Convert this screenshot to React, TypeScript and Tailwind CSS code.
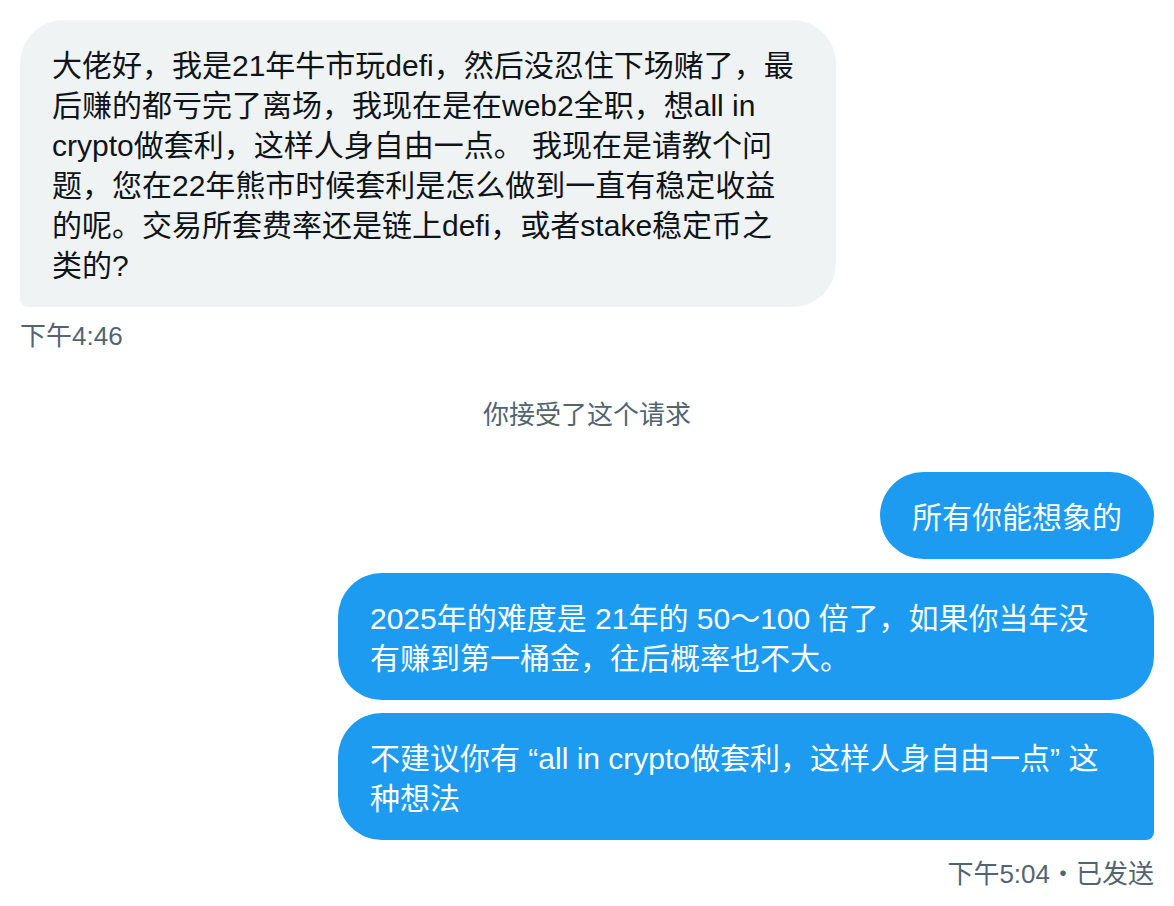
import React from "react";

const font = {
  fontFamily: '"Liberation Sans", "Noto Sans CJK SC", sans-serif',
};

export default function App() {
  return (
    <div
      className="w-[1174px] h-[906px] bg-white flex flex-col px-[20px] pt-[20px] overflow-hidden"
      style={font}
    >
      <div className="self-start w-[816px] bg-[#eff3f4] rounded-[44px] rounded-bl-[8px] px-[32px] pt-[26px] pb-[21px] text-[30px] leading-[40px] text-[#0f1419] whitespace-nowrap">
        大佬好，我是21年牛市玩defi，然后没忍住下场赌了，最
        <br />
        后赚的都亏完了离场，我现在是在web2全职，想all in
        <br />
        crypto做套利，这样人身自由一点。 我现在是请教个问
        <br />
        题，您在22年熊市时候套利是怎么做到一直有稳定收益
        <br />
        的呢。交易所套费率还是链上defi，或者stake稳定币之
        <br />
        类的?
      </div>
      <div className="mt-[13px] text-[26px] leading-[32px] text-[#536471]">
        下午4:46
      </div>

      <div className="mt-[47px] text-center text-[26px] leading-[32px] text-[#536471]">
        你接受了这个请求
      </div>

      <div className="mt-[41px] self-end bg-[#1d9bf0] rounded-[44px] px-[32px] pt-[26px] pb-[21px] text-[30px] leading-[40px] text-white whitespace-nowrap">
        所有你能想象的
      </div>
      <div className="mt-[14px] self-end w-[816px] bg-[#1d9bf0] rounded-[44px] px-[32px] pt-[26px] pb-[21px] text-[30px] leading-[40px] text-white whitespace-nowrap">
        2025年的难度是 21年的 50～100 倍了，如果你当年没
        <br />
        有赚到第一桶金，往后概率也不大。
      </div>
      <div className="mt-[13px] self-end w-[816px] bg-[#1d9bf0] rounded-[44px] rounded-br-[8px] px-[32px] pt-[26px] pb-[21px] text-[30px] leading-[40px] text-white whitespace-nowrap">
        不建议你有 “all in crypto做套利，这样人身自由一点” 这
        <br />
        种想法
      </div>
      <div className="mt-[18px] self-end text-[26px] leading-[32px] text-[#536471]">
        下午5:04・已发送
      </div>
    </div>
  );
}
